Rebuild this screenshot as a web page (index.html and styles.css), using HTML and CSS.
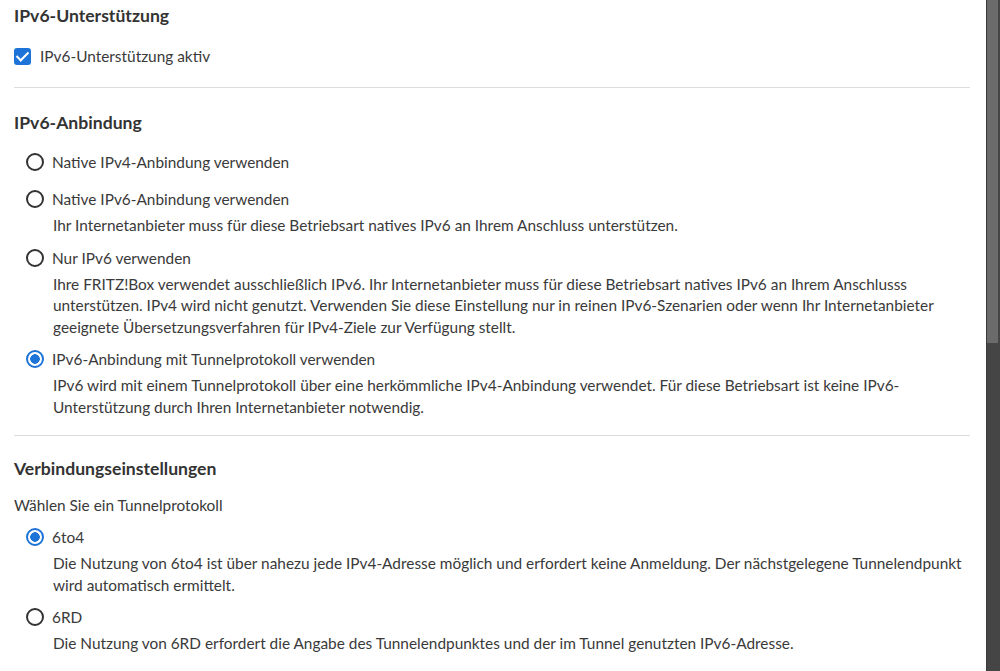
FILE: index.html
```html
<!DOCTYPE html>
<html>
<head>
<meta charset="utf-8">
<title>IPv6</title>
<link rel="stylesheet" href="styles.css">
</head>
<body>
	<div class="page">
		<div class="content">
			<div class="section first">
				<h2>IPv6-Unterstützung</h2>
				<label class="check"><span class="box"></span>IPv6-Unterstützung aktiv</label>
			</div>

			<div class="section second">
				<h2>IPv6-Anbindung</h2>
				<div class="opt solo">
					<label class="radio"><span class="dot"></span>Native IPv4-Anbindung verwenden</label>
				</div>
				<div class="opt">
					<label class="radio"><span class="dot"></span>Native IPv6-Anbindung verwenden</label>
					<p class="desc">Ihr Internetanbieter muss für diese Betriebsart natives IPv6 an Ihrem Anschluss unterstützen.</p>
				</div>
				<div class="opt">
					<label class="radio"><span class="dot"></span>Nur IPv6 verwenden</label>
					<p class="desc">Ihre FRITZ!Box verwendet ausschließlich IPv6. Ihr Internetanbieter muss für diese Betriebsart natives IPv6 an Ihrem Anschlusss unterstützen. IPv4 wird nicht genutzt. Verwenden Sie diese Einstellung nur in reinen IPv6-Szenarien oder wenn Ihr Internetanbieter geeignete Übersetzungsverfahren für IPv4-Ziele zur Verfügung stellt.</p>
				</div>
				<div class="opt">
					<label class="radio on"><span class="dot"></span>IPv6-Anbindung mit Tunnelprotokoll verwenden</label>
					<p class="desc">IPv6 wird mit einem Tunnelprotokoll über eine herkömmliche IPv4-Anbindung verwendet. Für diese Betriebsart ist keine IPv6-Unterstützung durch Ihren Internetanbieter notwendig.</p>
				</div>
			</div>

			<div class="section last">
				<h2>Verbindungseinstellungen</h2>
				<p class="hint">Wählen Sie ein Tunnelprotokoll</p>
				<div class="opt">
					<label class="radio on"><span class="dot"></span>6to4</label>
					<p class="desc">Die Nutzung von 6to4 ist über nahezu jede IPv4-Adresse möglich und erfordert keine Anmeldung. Der nächstgelegene Tunnelendpunkt wird automatisch ermittelt.</p>
				</div>
				<div class="opt">
					<label class="radio"><span class="dot"></span>6RD</label>
					<p class="desc">Die Nutzung von 6RD erfordert die Angabe des Tunnelendpunktes und der im Tunnel genutzten IPv6-Adresse.</p>
				</div>
			</div>
		</div>
		<div class="scrollbar"><div class="thumb"></div></div>
	</div>
</body>
</html>
```
FILE: styles.css
```css
*{margin:0; padding:0; box-sizing:border-box;}
html,body{height:100%; overflow:hidden;}
body{background:#fff; font-family:"Lato","Liberation Sans",sans-serif; font-size:15.4px; color:#3a3a3a;}
.page{display:flex; height:671px;}
.content{flex:1; padding:0 16px 0 14px;}
.scrollbar{width:14px; background:#454545; border-left:1px solid #3a3a3a;}
.thumb{height:343px; background:#6b6b6b; margin-right:2px;}

/*sections*/
.section{border-bottom:1px solid #dcdcdc;}
.section.first{padding:5px 0 20px;}
.section.second{padding:24px 0 17px;}
.section.last{border-bottom:none; padding-top:22px;}
h2{font-size:17.6px; font-weight:700; color:#333; line-height:22px;}

.check{display:flex; align-items:center; gap:9px; margin-top:18px; line-height:22px;}
.check .box{width:17px; height:17px; border-radius:3px; background:#1e73d8; position:relative;}
.check .box::after{content:""; position:absolute; left:5px; top:1px; width:5px; height:10px; border:solid #fff; border-width:0 2.5px 2.5px 0; transform:rotate(45deg);}

/*radio options*/
.opt{padding-left:12px; margin-top:10px;}
.opt.solo{padding-bottom:5px;}
h2 + .opt{margin-top:17px;}
.radio{display:flex; align-items:center; gap:8px; line-height:22px;}
.radio .dot{width:18px; height:18px; border:2px solid #333; border-radius:50%; flex:none;}
.radio.on .dot{border-color:#1e73d8; background:radial-gradient(circle, #1e73d8 0 4.5px, #fff 5px);}
.desc{padding-left:27px; margin-top:5px; line-height:21.5px;}
.hint{margin-top:14px; line-height:22px;}
```
